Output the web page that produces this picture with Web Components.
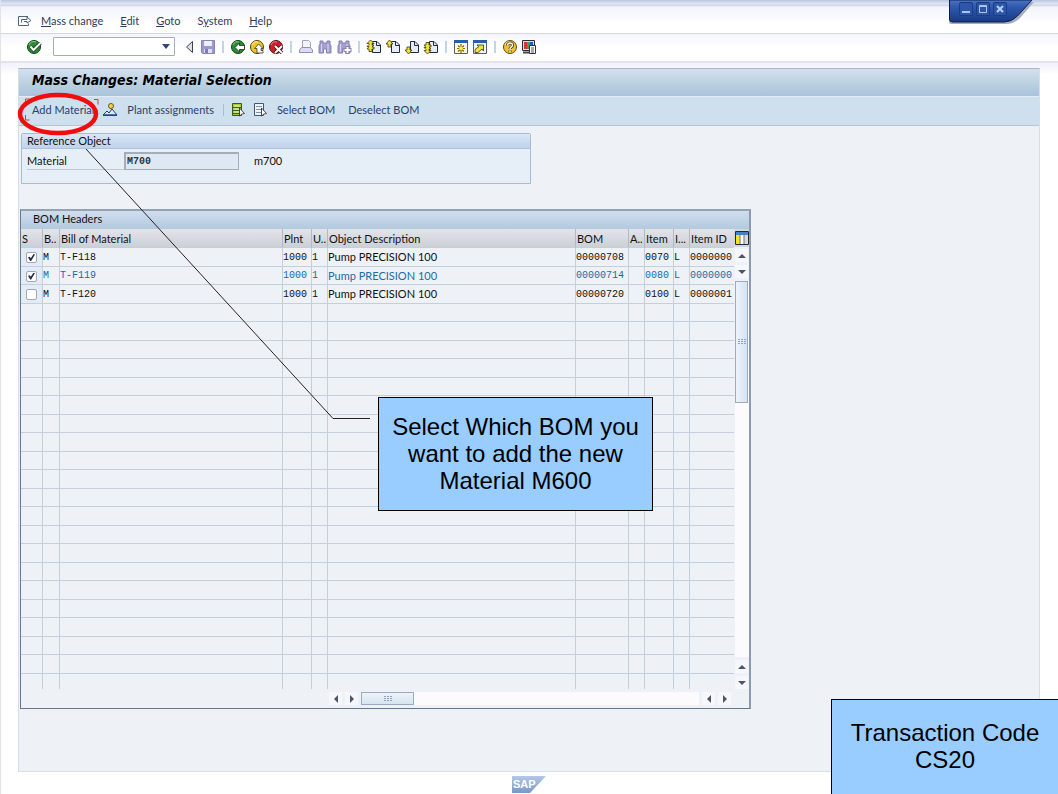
<!DOCTYPE html>
<html lang="en">
<head>
<meta charset="utf-8">
<title>Mass Changes: Material Selection</title>
<style>
	body {
		margin: 0;
		background: #fff;
		color: #111;
		font: 11px/14px Lato, Roboto, sans-serif;
	}
</style>
</head>
<body>
<sap-window>
	<sap-menubar slot="menu"></sap-menubar>
	<sap-toolbar slot="tools"></sap-toolbar>
	<span slot="title">Mass Changes: Material Selection</span>
	<sap-actions slot="actions"></sap-actions>
	<sap-group heading="Reference Object">
		<sap-field label="Material" value="M700">m700</sap-field>
	</sap-group>
	<sap-grid heading="BOM Headers"></sap-grid>
</sap-window>
<slide-marks></slide-marks>
<slide-note class="step">Select Which BOM you want to add the new Material M600</slide-note>
<slide-note class="code">Transaction Code CS20</slide-note>

<script>
// Icon drawings, all on a 16x16 grid
const page = '<path d="M6.500 2.500h4.500l3.500 3.500v7.500h-8z" fill="#e4ecfa" stroke="#222a3c"/><path d="M10.500 2.500v4h4" fill="none" stroke="#222a3c"/>';
const up = '<path d="M4.500 1l3.500 4H6v3H3V5H1z" fill="#f4e23a" stroke="#3a3510" stroke-width=".8"/>';
const down = '<path d="M4.500 15l3.500-4H6V8H3v3H1z" fill="#f4e23a" stroke="#3a3510" stroke-width=".8"/>';
const binoculars = '<path d="M3 2h3v2h4V2h3v3l1 2v7H9.500v-4h-3v4H2V7l1-2z" fill="#a5a0d0" stroke="#8480b5"/><path d="M4.500 5v8M11 5v8" stroke="#d6d4f0"/>';
const icons = {
	exit: '<path d="M11 3.500H1.500v9H11.500V10.500" fill="none" stroke="#55627e"/><path d="M4.500 9.500V6.500H10V4l4 3.500L10 10V8.500H7" fill="#fff" stroke="#55627e"/>',
	ok: '<circle cx="8" cy="8" r="6.500" fill="#2c8a36" stroke="#123c18"/><path d="M3 6a5 5 0 0 1 7-3" fill="none" stroke="#86cf7c"/><path d="M4.500 7.500l3 3.500 7-7" fill="none" stroke="#1a3c1e" stroke-width="3.500"/><path d="M4.500 7.500l3 3.500 7-7" fill="none" stroke="#fff" stroke-width="2"/>',
	back: '<path d="M11.500 2.500v11l-6-5.500z" fill="#dce0e8" stroke="#3d4250"/>',
	save: '<path d="M1.500 1.500h13v13h-12l-1-1z" fill="#9a98cc" stroke="#8583b8"/><path d="M4 2h8v5H4z" fill="#eeeefa"/><path d="M4 10h8v4H4z" fill="#e0e0f4"/><path d="M5 10h3v4H5z" fill="#807db5"/>',
	green: '<circle cx="8" cy="8" r="6.500" fill="#2c8a36" stroke="#123c18"/><path d="M3 6a5 5 0 0 1 6-3" fill="none" stroke="#86cf7c"/><path d="M5 8.500l4.500-4.500v2.500h5v4h-5V13z" fill="#fff" stroke="#1c2c1c" stroke-width=".8"/>',
	yellow: '<circle cx="8" cy="8" r="6.500" fill="#edc52a" stroke="#514513"/><path d="M3 6a5 5 0 0 1 6-3" fill="none" stroke="#fff2a8"/><path d="M9.500 5l4.500 4.500h-2v2h2v2.500H8v-4.500H5.500z" fill="#fff" stroke="#333" stroke-width=".8"/>',
	red: '<circle cx="8" cy="8" r="6.500" fill="#c9202a" stroke="#511017"/><path d="M3 6a5 5 0 0 1 6-3" fill="none" stroke="#f08580"/><path d="M7 7l7 7m0-7l-7 7" stroke="#3c1014" stroke-width="3.500"/><path d="M7 7l7 7m0-7l-7 7" stroke="#fff" stroke-width="2"/>',
	print: '<path d="M4.500 9V1.500h6l2 2V9" fill="#f3f3fc" stroke="#a3a2c5"/><path d="M1.500 13.500V11l2-2.500h9l2 2.500v2.500z" fill="#dddcf0" stroke="#918fbb"/>',
	find: binoculars,
	next: binoculars + '<path d="M11.500 7v8M7.500 11h8" stroke="#8480b5" stroke-width="4"/><path d="M11.500 8v6M8.500 11h6" stroke="#fff" stroke-width="2"/>',
	first: page + '<path d="M4.500 1l3.500 3.500H6V6l2 0-2 2 2 0v2L6 10v2.500H3V10H1l2-2.500H1L3 5.500V4.500H1z" fill="#f4e23a" stroke="#3a3510" stroke-width=".8"/>',
	prev: page + up,
	follow: page + down,
	last: page + '<path d="M4.500 15l3.500-3.500H6V10l2 0-2-2 2 0V6L6 6V3.500H3V6H1l2 2.500H1l2 2v1H1z" fill="#f4e23a" stroke="#3a3510" stroke-width=".8"/>',
	session: '<path d="M1.500 1.500h13v13h-13z" fill="#fbf8dc" stroke="#555f70"/><path d="M1 1h14v3H1z" fill="#2c5cab"/><path d="M8 5v9M4 9.500h8M5 6.500l6 6m0-6l-6 6" stroke="#7d6b10" stroke-width="1.200"/><circle cx="8" cy="9.500" r="2" fill="#ffe94c"/>',
	shortcut: '<path d="M1.500 1.500h13v13h-13z" fill="#f1f5fb" stroke="#555f70"/><path d="M1 1h14v3H1z" fill="#2c5cab"/><path d="M3 13.500v-3l4-3-2-1.500h6.500V12L10 10l-4 3.500z" fill="#f4e23a" stroke="#3a3510" stroke-width=".8"/>',
	help: '<circle cx="8" cy="8" r="6.500" fill="#f1c232" stroke="#5d4a12"/><path d="M3 6a5 5 0 0 1 6-3" fill="none" stroke="#fff2a8"/><path d="M5.500 6.500C5.500 3 11 3.500 10.500 6.500 10.500 8 8 8 8 10M8 11.500v1.500" fill="none" stroke="#443608" stroke-width="3"/><path d="M5.500 6.500C5.500 3 11 3.500 10.500 6.500 10.500 8 8 8 8 10M8 11.500v1.500" fill="none" stroke="#fff" stroke-width="1.500"/>',
	layout: '<path d="M1.500 1.500h12v10h-12z" fill="#ddd" stroke="#2b2b35"/><path d="M3 3h3v7H3z" fill="#db3030"/><path d="M6 3h3v7H6z" fill="#36a845"/><path d="M9 3h3v7H9z" fill="#2a58b8"/><path d="M2 13.500h7" stroke="#444" stroke-width="2"/><path d="M8.500 6.500h6v8h-6z" fill="#fff" stroke="#333"/><path d="M10 9h3M10 11h3M10 13h3" stroke="#555"/>',
	person: '<circle cx="9" cy="4" r="2.500" fill="#f3d64a" stroke="#6a5716"/><path d="M1 13l4-4 2 2 3-4 5 6z" fill="#dce8f7" stroke="#1c4478"/><path d="M1 12.500h14V14H1z" fill="#1d4a86"/>',
	choose: '<path d="M2.500 1.500h9v12h-9z" fill="#a8c83c" stroke="#3a5818"/><path d="M4 4h6M4 7h6M4 10h5" stroke="#eef7c2"/><path d="M2 5.500h9M2 8.500h9M2 11.500h9" stroke="#3c621c"/><path d="M9.500 6l5 5.500-2.500.5-2.500 2z" fill="#fff" stroke="#222" stroke-width=".8"/>',
	unchoose: '<path d="M2.500 1.500h9v12h-9z" fill="#edf3fb" stroke="#4a5668"/><path d="M4 4.500h6M4 7.500h6M4 10.500h5" stroke="#7b93b2"/><path d="M9.500 6l5 5.500-2.500.5-2.500 2z" fill="#fff" stroke="#222" stroke-width=".8"/>',
	columns: '<path d="M1.500 1.500h13v13h-13z" fill="#fff" stroke="#222a38"/><path d="M2 2h12v3H2z" fill="#3f88cf"/><path d="M2 5h4v9H2z" fill="#f6e31c"/><path d="M10 5h4v9h-4z" fill="#d8dbe0"/><path d="M6 2v12M10 2v12" stroke="#68707c"/>'
};

class SapIcon extends HTMLElement {
	constructor() {
		super();
		this.attachShadow({mode: 'open'});
	}

	connectedCallback() {
		this.shadowRoot.innerHTML = `
		<style>
			:host { display: block; width: 16px; height: 16px; }
			svg { display: block; }
		</style>
		<svg width="16" height="16" viewBox="0 0 16 16" aria-hidden="true">${icons[this.getAttribute('name')]}</svg>`;
	}
}

class SapWindow extends HTMLElement {
	constructor() {
		super();
		this.attachShadow({mode: 'open'});
		this.shadowRoot.innerHTML = `
		<style>
			:host {
				display: flex;
				flex-direction: column;
				min-height: 100vh;
				box-sizing: border-box;
				border-left: 1px solid #e2e4ea;
				background: linear-gradient(#b9c5e0 0, #e4e9f6 4px, #c9d2e6 5px, #f3f4fb 7px, #fff 24px);
			}
			.menu { padding: 13px 16px 4px; border-bottom: 1px solid #d5d8e2; }
			.tools {
				padding: 3px 25px 5px;
				border-bottom: 2px solid #e4e5ec;
				background: linear-gradient(#f5f5fe, #fff 14px);
			}
			.body {
				flex: 1;
				display: flex;
				padding: 5px 18px 0 17px;
				background: linear-gradient(#f1f0fc, #fff 12px);
			}
			main {
				flex: 1;
				border: 1px solid #d5dee9;
				border-top-color: #a9b6ca;
				background: #eef1f6;
			}
			h1 {
				margin: 0;
				padding: 1px 13px 6px;
				font: italic bold 14px/20px "DejaVu Sans Condensed", "DejaVu Sans", sans-serif;
				color: #000;
				background: linear-gradient(#d3e0ee, #b8cfe0 60%, #a9c3dc);
			}
			.actions {
				padding: 5px 6px 7px;
				border-top: 1px solid #e1ecf6;
				border-bottom: 1px solid #b5c5d8;
				background: #cedfee;
			}
			.content {
				display: flex;
				flex-direction: column;
				align-items: flex-start;
				gap: 25px;
				padding: 7px 2px 0 1px;
			}
			footer { display: flex; justify-content: center; padding: 3px 2px 1px 0; }
			svg { display: block; }
			nav { position: absolute; top: 0; right: 24px; }
			nav div { position: absolute; top: 2px; left: 11px; display: flex; gap: 3px; }
			button {
				width: 14px;
				height: 14px;
				padding: 1px;
				border: 1px solid #1b3b83;
				border-radius: 2px;
				background: #2e56a8;
			}
		</style>
		<div class="menu"><slot name="menu"></slot></div>
		<div class="tools"><slot name="tools"></slot></div>
		<div class="body">
			<main>
				<h1><slot name="title"></slot></h1>
				<div class="actions"><slot name="actions"></slot></div>
				<div class="content"><slot></slot></div>
			</main>
		</div>
		<footer>
			<svg width="34" height="18" viewBox="0 0 34 18" role="img" aria-label="SAP">
				<defs><linearGradient id="g" x2="0" y2="1"><stop stop-color="#b3c8e8"/><stop offset="1" stop-color="#7897c4"/></linearGradient></defs>
				<path d="M0 1h34L18 18H0z" fill="url(#g)"/>
				<text x="1" y="13" font-family="Liberation Sans, sans-serif" font-weight="bold" font-size="11" fill="#fff">SAP</text>
			</svg>
		</footer>
		<nav>
			<svg width="86" height="26" viewBox="0 0 86 26" aria-hidden="true">
				<defs><linearGradient id="w" x2="0" y2="1"><stop stop-color="#4a74c4"/><stop offset=".3" stop-color="#2f5aae"/><stop offset="1" stop-color="#173a84"/></linearGradient></defs>
				<path d="M1 2v20q0 2 3 2h54q8 0 14-6L86 2z" fill="#a9adbb"/>
				<path d="M1.500 0v19q0 3 3 3h52q7 0 13-6L84 0z" fill="url(#w)" stroke="#0c1e4c"/>
			</svg>
			<div>
				<button aria-label="Minimize"><svg width="10" height="10"><path d="M1 8h8" stroke="#a9c3f5" stroke-width="2"/></svg></button>
				<button aria-label="Maximize"><svg width="10" height="10"><path d="M1.500 1.500h7v7h-7zM1 2.500h8" fill="none" stroke="#a9c3f5"/></svg></button>
				<button aria-label="Close"><svg width="10" height="10"><path d="M2 2l6 6m0-6L2 8" stroke="#b9cff8" stroke-width="2"/></svg></button>
			</div>
		</nav>`;
	}
}

class SapMenubar extends HTMLElement {
	constructor() {
		super();
		this.attachShadow({mode: 'open'});
		this.shadowRoot.innerHTML = `
		<style>
			:host { display: flex; align-items: center; gap: 17px; height: 16px; color: #2c3b5e; }
			sap-icon { margin-right: -9px; }
			a { color: inherit; text-decoration: none; }
		</style>
		<sap-icon name="exit"></sap-icon>
		<a href="#"><u>M</u>ass change</a>
		<a href="#"><u>E</u>dit</a>
		<a href="#"><u>G</u>oto</a>
		<a href="#">S<u>y</u>stem</a>
		<a href="#"><u>H</u>elp</a>`;
	}
}

class SapToolbar extends HTMLElement {
	constructor() {
		super();
		this.attachShadow({mode: 'open'});
		// Each inner list is one run of buttons, split by a separator
		let groups = [
			['back', 'save'],
			['green', 'yellow', 'red'],
			['print', 'find', 'next'],
			['first', 'prev', 'follow', 'last'],
			['session', 'shortcut'],
			['help', 'layout']
		];
		let button = name => `<button aria-label="${name}"><sap-icon name="${name}"></sap-icon></button>`;
		this.shadowRoot.innerHTML = `
		<style>
			:host { display: flex; align-items: center; gap: 3px; height: 19px; }
			button { padding: 0; border: 0; background: none; }
			label { display: grid; margin: 0 3px 0 8px; }
			select, label svg { grid-area: 1 / 1; }
			select {
				appearance: none;
				width: 122px;
				height: 19px;
				border: 1px solid #a8acb8;
				border-radius: 1px;
				background: #fff;
			}
			label svg { place-self: center end; margin-right: 5px; pointer-events: none; }
			i { width: 2px; height: 12px; margin: 0 3px; background: #bfd5ea; }
		</style>
		${button('ok')}
		<label>
			<select aria-label="Command"><option></option></select>
			<svg width="8" height="5"><path d="M0 0h8L4 5z" fill="#33456e"/></svg>
		</label>
		${groups.map(g => g.map(button).join('')).join('<i></i>')}`;
	}
}

class SapActions extends HTMLElement {
	constructor() {
		super();
		this.attachShadow({mode: 'open'});
		this.shadowRoot.innerHTML = `
		<style>
			:host { display: flex; align-items: center; gap: 6px; height: 16px; }
			button {
				display: flex;
				align-items: center;
				gap: 9px;
				padding: 0;
				border: 0;
				background: none;
				font: inherit;
				color: #2a3f6a;
			}
			.text { padding: 0 2px 0 7px; }
			i { width: 1px; height: 12px; margin: 0 0 0 3px; background: #a5bdd6; }
		</style>
		<button class="text">Add Material</button>
		<button><sap-icon name="person"></sap-icon>Plant assignments</button>
		<i></i>
		<button aria-label="Select all"><sap-icon name="choose"></sap-icon></button>
		<button><sap-icon name="unchoose"></sap-icon>Select BOM</button>
		<button class="text">Deselect BOM</button>`;
	}
}

class SapGroup extends HTMLElement {
	constructor() {
		super();
		this.attachShadow({mode: 'open'});
		this.shadowRoot.innerHTML = `
		<style>
			:host {
				display: block;
				box-sizing: border-box;
				width: 510px;
				margin-left: 1px;
				border: 1px solid #a5bbd8;
				border-radius: 2px 2px 0 0;
				background: #e6eef7;
			}
			h2 {
				margin: 0;
				padding: 0 5px;
				border-bottom: 1px solid #abc2e0;
				font: inherit;
				background: linear-gradient(#d9e6f5, #bfd3ec);
			}
			div { padding: 3px 5px 13px; }
		</style>
		<h2>${this.getAttribute('heading')}</h2>
		<div><slot></slot></div>`;
	}
}

class SapField extends HTMLElement {
	constructor() {
		super();
		this.attachShadow({mode: 'open'});
		this.shadowRoot.innerHTML = `
		<style>
			:host { display: flex; align-items: center; }
			label { width: 97px; height: 16px; line-height: 16px; border-bottom: 1px solid #c3c9d2; }
			input {
				box-sizing: border-box;
				width: 115px;
				height: 18px;
				margin-right: 15px;
				padding: 0 1px;
				border: 1px solid #a7adb7;
				border-width: 2px 1px 1px 2px;
				background: #dee8f5;
				font: bold 10px "Liberation Mono", monospace;
				color: #333;
			}
		</style>
		<label for="v">${this.getAttribute('label')}</label>
		<input id="v" value="${this.getAttribute('value')}" readonly>
		<slot></slot>`;
	}
}

class SapScroll extends HTMLElement {
	constructor() {
		super();
		this.attachShadow({mode: 'open'});
		let arrow = d => `<button aria-label="Scroll"><svg width="8" height="8"><path d="${d}" fill="#4b5566"/></svg></button>`;
		let vertical = this.hasAttribute('vertical');
		let less = arrow(vertical ? 'M0 6l4-4 4 4z' : 'M6 0L2 4l4 4z');
		let more = arrow(vertical ? 'M0 2l4 4 4-4z' : 'M2 0l4 4-4 4z');
		this.shadowRoot.innerHTML = `
		<style>
			:host { display: flex; gap: 3px; }
			:host([vertical]) { flex-direction: column; }
			button {
				display: grid;
				place-content: center;
				width: 13px;
				height: 13px;
				padding: 0;
				border: 0;
				background: #f6f7fd;
			}
			.track { flex: 1; display: flex; background: #fdfafe; }
			.thumb {
				display: grid;
				place-content: center;
				box-sizing: border-box;
				width: 53px;
				border: 1px solid #9aabc0;
				background: linear-gradient(#edf3f9, #d6e3f0);
			}
			:host([vertical]) .thumb {
				width: 13px;
				height: 122px;
				background: linear-gradient(90deg, #edf3f9, #d6e3f0);
			}
		</style>
		${less}${more}
		<div class="track"><div class="thumb"><svg width="8" height="6"><path d="M0 .5h8M0 2.500h8M0 4.500h8" stroke="#93a3b8" stroke-dasharray="2 1"/></svg></div></div>
		${less}${more}`;
	}
}

class SapGrid extends HTMLElement {
	constructor() {
		super();
		this.attachShadow({mode: 'open'});
		this.columns = [
			['S', 22], ['B..', 17], ['Bill of Material', 223], ['Plnt', 29], ['U..', 16],
			['Object Description', 248], ['BOM', 53], ['A..', 16], ['Item', 29], ['I...', 16], ['Item ID', 44]
		];
		this.rows = [
			[true, 'M', 'T-F118', '1000', '1', 'Pump PRECISION 100', '00000708', '', '0070', 'L', '0000000'],
			[true, 'M', 'T-F119', '1000', '1', 'Pump PRECISION 100', '00000714', '', '0080', 'L', '0000000'],
			[false, 'M', 'T-F120', '1000', '1', 'Pump PRECISION 100', '00000720', '', '0100', 'L', '0000001']
		];
		this.render();
	}

	row(cells, n) {
		let check = `<td><input type="checkbox" aria-label="Select ${cells[2]}" ${cells[0] ? 'checked' : ''}></td>`;
		let rest = cells.slice(1).map((c, i) => `<td${i == 4 ? ' class="text"' : ''}>${c}</td>`).join('');
		return `<tr${n == 1 ? ' class="current"' : ''}>${check}${rest}</tr>`;
	}

	render() {
		// The visible area holds 24 rows, the last one is cut off
		let empty = `<tr>${'<td></td>'.repeat(this.columns.length)}</tr>`.repeat(24 - this.rows.length);
		this.shadowRoot.innerHTML = `
		<style>
			:host {
				display: block;
				border: 1px solid #66788c;
				border-top: 2px solid #93a3b2;
				border-right: 2px solid #8b9bad;
			}
			h2 {
				margin: 0;
				padding: 1px 12px 3px;
				font: inherit;
				background: linear-gradient(#cfdeee, #b3c9df);
			}
			.area { display: grid; grid-template-columns: 713px 15px; }
			table { table-layout: fixed; width: 713px; border-collapse: separate; border-spacing: 0; }
			th, td {
				box-sizing: border-box;
				height: 18px;
				padding: 1px 0 0;
				overflow: hidden;
				white-space: nowrap;
				text-align: left;
				border-right: 1px solid #c3cfdb;
				border-bottom: 1px solid #c3cfdb;
				line-height: 14px;
			}
			th {
				height: 19px;
				padding: 2px 0 0 1px;
				font-weight: normal;
				background: linear-gradient(#e2e4e9, #ccd0d7);
				border-right-color: #b1b9c5;
			}
			td { font: 10px/14px "Liberation Mono", monospace; }
			td:last-child, th:last-child { border-right: 0; }
			tbody tr:nth-child(odd) td { height: 19px; }
			tbody tr:last-child td { height: 15px; border-bottom: 0; }
			td.text { padding: 0; font: 11px/14px Lato, Roboto, sans-serif; }
			.current { color: #1a6ca8; }
			td:first-child { padding-left: 5px; background: #e3ecf6; }
			tr:nth-child(n+4) td:first-child { background: none; }
			input {
				appearance: none;
				display: grid;
				place-content: center;
				width: 11px;
				height: 11px;
				margin: 0;
				border: 1px solid #a1a7b3;
				border-radius: 2px;
				box-sizing: border-box;
				background: #fff;
			}
			input:checked::after {
				content: "";
				width: 7px;
				height: 7px;
				background: #262b45;
				clip-path: polygon(0 45%, 25% 40%, 40% 62%, 80% 0, 100% 8%, 45% 100%, 30% 100%);
			}
			aside { display: flex; flex-direction: column; gap: 2px; }
			aside button { padding: 1px 0; border: 0; background: #d4d7de; }
			aside sap-scroll { flex: 1; margin-left: 1px; }
			.bottom { width: 402px; margin: 3px 18px 3px auto; }
		</style>
		<h2>${this.getAttribute('heading')}</h2>
		<div class="area">
			<table>
				<colgroup>${this.columns.map(c => `<col style="width: ${c[1]}px">`).join('')}</colgroup>
				<thead><tr>${this.columns.map(c => `<th>${c[0]}</th>`).join('')}</tr></thead>
				<tbody>${this.rows.map(this.row).join('')}${empty}</tbody>
			</table>
			<aside>
				<button aria-label="Configure columns"><sap-icon name="columns"></sap-icon></button>
				<sap-scroll vertical></sap-scroll>
			</aside>
		</div>
		<sap-scroll class="bottom"></sap-scroll>`;
	}
}

// Red ring round the button and the line that leads to the note
class SlideMarks extends HTMLElement {
	constructor() {
		super();
		this.attachShadow({mode: 'open'});
		this.shadowRoot.innerHTML = `
		<style>
			:host { position: absolute; top: 0; left: 0; pointer-events: none; }
			svg { display: block; }
		</style>
		<svg width="400" height="430" fill="none" aria-hidden="true">
			<path d="M25.500 104v-5h4M94 99.500h4v5M25.500 115v5h4" stroke="#d43a48"/>
			<path d="M86 149l247 269.500h37" stroke="#222"/>
			<ellipse cx="58" cy="114" rx="38" ry="19" stroke="#f20d0d" stroke-width="4.500"/>
		</svg>`;
	}
}

class SlideNote extends HTMLElement {
	constructor() {
		super();
		this.attachShadow({mode: 'open'});
		this.shadowRoot.innerHTML = `
		<style>
			:host {
				position: absolute;
				box-sizing: border-box;
				padding: 15px 12px 16px;
				border: 1px solid #000;
				background: #9cf;
				color: #000;
				font: 24px/27px "Liberation Sans", sans-serif;
				text-align: center;
			}
			:host(.step) { left: 378px; top: 397px; width: 275px; }
			:host(.code) {
				position: fixed;
				right: 0;
				bottom: 0;
				width: 227px;
				padding: 19px 16px 21px;
				border-width: 1px 0 0 1px;
			}
		</style>
		<slot></slot>`;
	}
}

customElements.define('sap-icon', SapIcon);
customElements.define('sap-scroll', SapScroll);
customElements.define('sap-window', SapWindow);
customElements.define('sap-menubar', SapMenubar);
customElements.define('sap-toolbar', SapToolbar);
customElements.define('sap-actions', SapActions);
customElements.define('sap-field', SapField);
customElements.define('sap-group', SapGroup);
customElements.define('sap-grid', SapGrid);
customElements.define('slide-marks', SlideMarks);
customElements.define('slide-note', SlideNote);
</script>
</body>
</html>
